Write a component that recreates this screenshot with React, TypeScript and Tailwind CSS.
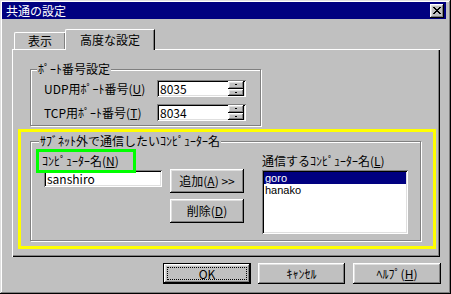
const font = "font-['Noto_Sans_CJK_JP','Liberation_Sans',sans-serif]";
const raised =
  "bg-[#c0c0c0] shadow-[inset_-1px_-1px_#000,inset_1px_1px_#fff,inset_-2px_-2px_#808080,inset_2px_2px_#dfdfdf]";
const sunken =
  "bg-white shadow-[inset_1px_1px_#808080,inset_-1px_-1px_#fff,inset_2px_2px_#000,inset_-2px_-2px_#dfdfdf]";
const etched =
  "border border-[#808080] shadow-[inset_1px_1px_#fff,1px_1px_#fff]";

function Mn({ k }: { k: string }) {
  return <span className="underline underline-offset-[1px]">{k}</span>;
}

function Spin({ value }: { value: string }) {
  return (
    <div className={`flex h-[17px] w-[89px] items-center p-[2px] ${sunken}`}>
      <span className="flex-1 pl-[1px] leading-[13px]">{value}</span>
      <div className="flex h-[15px] w-[16px] flex-col">
        {[0, 1].map((i) => (
          <div key={i} className={`flex flex-1 items-center justify-center ${raised}`}>
            <span className="h-[1px] w-[2px] bg-black" />
          </div>
        ))}
      </div>
    </div>
  );
}

function Btn({ children, w }: { children: React.ReactNode; w: string }) {
  return (
    <div className={`flex h-[21px] items-center justify-center leading-[14px] ${w} ${raised}`}>
      {children}
    </div>
  );
}

export default function App() {
  return (
    <div
      className={`flex h-[294px] w-[451px] flex-col bg-[#c0c0c0] text-[12px] text-black ${font} shadow-[inset_-1px_-1px_#000,inset_1px_1px_#dfdfdf,inset_-2px_-2px_#808080,inset_2px_2px_#fff]`}
    >
      {/* タイトルバー */}
      <div className="ml-[2px] mr-[5px] mt-[2px] flex h-[17px] items-center bg-[#000080] pl-[4px] pr-[2px] text-white">
        <span className="flex-1 leading-[14px]">共通の設定</span>
        <div className={`flex h-[14px] w-[14px] items-center justify-center ${raised}`}>
          <svg width="8" height="7" viewBox="0 0 8 7" shapeRendering="crispEdges">
            <path
              d="M0 0h2v1h1v1h2V1h1V0h2v1H7v1H6v1H5v1h1v1h1v1h1v1H6V6H5V5H3v1H2v1H0V6h1V5h1V4h1V3H2V2H1V1H0z"
              fill="#000"
            />
          </svg>
        </div>
      </div>

      {/* タブ */}
      <div className="ml-[12px] mt-[10px] flex h-[20px] items-end">
        <div className="ml-[2px] flex h-[17px] w-[51px] items-center justify-center rounded-tl-[2px] border-l border-t border-white leading-[14px] shadow-[inset_-1px_0_#808080]">
          表示
        </div>
        <div className="relative z-10 -mb-[1px] flex h-[21px] w-[90px] items-start justify-center rounded-tl-[2px] border-l border-r border-t border-l-white border-r-black border-t-white bg-[#c0c0c0] pt-[3px] leading-[14px] shadow-[inset_-1px_0_#808080]">
          高度な設定
        </div>
      </div>

      {/* タブパネル */}
      <div className="ml-[12px] flex h-[208px] w-[428px] flex-col border-l border-t border-white shadow-[inset_-1px_-1px_#000,inset_-2px_-2px_#808080]">
        {/* ポート番号設定 */}
        <div className={`relative ml-[17px] mt-[19px] h-[57px] w-[231px] ${etched}`}>
          <span className="absolute -top-[8px] left-[6px] bg-[#c0c0c0] px-[1px] leading-[14px]">
            ﾎﾟｰﾄ番号設定
          </span>
          <div className="ml-[13px] mt-[10px] flex items-center">
            <span className="w-[113px] leading-[14px]">
              UDP用ﾎﾟｰﾄ番号(<Mn k="U" />)
            </span>
            <Spin value="8035" />
          </div>
          <div className="ml-[13px] mt-[7px] flex items-center">
            <span className="w-[113px] leading-[14px]">
              TCP用ﾎﾟｰﾄ番号(<Mn k="T" />)
            </span>
            <Spin value="8034" />
          </div>
        </div>

        {/* 黄色の枠 */}
        <div className="ml-[5px] mt-[3px] h-[120px] w-[418px] border-[3px] border-[#ffff00]">
          <div className={`relative ml-[9px] mt-[9px] flex h-[100px] w-[391px] items-start ${etched}`}>
            <span className="absolute -top-[8px] left-[8px] bg-[#c0c0c0] px-[1px] leading-[14px]">
              ｻﾌﾞﾈｯﾄ外で通信したいｺﾝﾋﾟｭｰﾀｰ名
            </span>

            <div className="ml-[5px] mt-[7px] flex flex-col">
              <div className="relative z-10 flex h-[24px] w-[100px] items-center border-[3px] border-[#00ff00] pl-[3px] leading-[14px]">
                ｺﾝﾋﾟｭｰﾀｰ名(<Mn k="N" />)
              </div>
              <div className={`-mt-[3px] ml-[8px] flex h-[17px] w-[118px] items-center px-[3px] leading-[13px] ${sunken}`}>
                sanshiro
              </div>
            </div>

            <div className="ml-[8px] mt-[27px] flex flex-col gap-[6px]">
              <div className={`flex h-[24px] w-[74px] items-center justify-center leading-[14px] ${raised}`}>
                追加(<Mn k="A" />) &gt;&gt;
              </div>
              <div className={`flex h-[24px] w-[74px] items-center justify-center leading-[14px] ${raised}`}>
                削除(<Mn k="D" />)
              </div>
            </div>

            <div className="ml-[18px] mt-[12px] flex flex-col">
              <span className="h-[16px] leading-[14px]">
                通信するｺﾝﾋﾟｭｰﾀｰ名(<Mn k="L" />)
              </span>
              <div className={`h-[64px] w-[146px] p-[2px] font-['Liberation_Sans',sans-serif] text-[11px] ${sunken}`}>
                <div className="h-[12px] bg-[#000080] pl-[1px] leading-[12px] text-white">goro</div>
                <div className="h-[12px] pl-[1px] leading-[12px]">hanako</div>
              </div>
            </div>
          </div>
        </div>
      </div>

      {/* ボタン */}
      <div className="ml-[163px] mt-[6px] flex">
        <div className="h-[21px] w-[88px] border border-black">
          <div className={`flex h-full w-full items-center justify-center p-[3px] ${raised}`}>
            <div className="flex h-full w-full items-center justify-center border border-dotted border-black leading-[13px]">
              OK
            </div>
          </div>
        </div>
        <div className="ml-[7px]">
          <Btn w="w-[87px]">ｷｬﾝｾﾙ</Btn>
        </div>
        <div className="ml-[8px]">
          <Btn w="w-[88px]">
            ﾍﾙﾌﾟ(<Mn k="H" />)
          </Btn>
        </div>
      </div>
    </div>
  );
}
